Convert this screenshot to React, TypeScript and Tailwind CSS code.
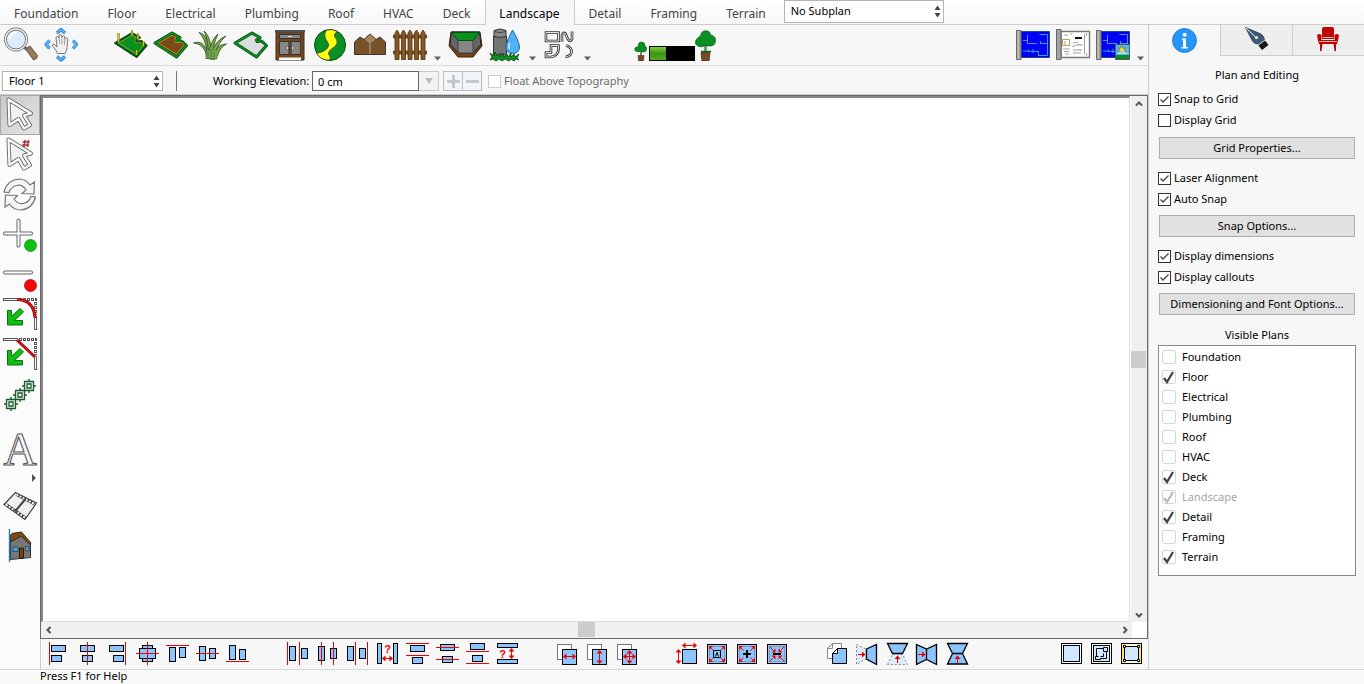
import React from "react";

type Kids = { children?: React.ReactNode };

const BLUE = "#8cc4fc";
const RED = "#f00000";

/* ---------- shared controls ---------- */

function Tool({ label, children, active }: Kids & { label: string; active?: boolean }) {
  return (
    <button
      type="button"
      aria-label={label}
      className={
        active
          ? "size-10 shrink-0 bg-linear-to-br from-[#c8c8c8] to-[#e4e4e4] outline-1 -outline-offset-1 outline-[#a8a8a8]"
          : "size-10 shrink-0"
      }
    >
      <svg viewBox="0 0 40 40" className="size-10 overflow-visible" fill="none">
        {children}
      </svg>
    </button>
  );
}

function More({ label }: { label: string }) {
  return (
    <button type="button" aria-label={label} className="h-10 w-[15px] shrink-0">
      <svg viewBox="0 0 15 40" className="h-10 w-[15px]">
        <path d="M4 31.500h7l-3.500 4z" fill="#606060" />
      </svg>
    </button>
  );
}

function Mini({ label, children }: Kids & { label: string }) {
  return (
    <button type="button" aria-label={label} className="size-[30px] shrink-0">
      <svg viewBox="0 0 30 30" className="size-[30px]" fill="none">
        {children}
      </svg>
    </button>
  );
}

function Picker({ label, value, className }: { label: string; value: string; className: string }) {
  return (
    <div className={"relative " + className}>
      <select
        aria-label={label}
        defaultValue={value}
        className="block h-full w-full appearance-none border border-[#b4b4b4] bg-white pl-1.5 text-[11px] text-black"
      >
        <option>{value}</option>
      </select>
      <svg viewBox="0 0 7 13" className="pointer-events-none absolute inset-y-0 right-[3px] my-auto h-[13px] w-[7px]" fill="#444">
        <path d="M.5 5h6L3.500.5zM.5 8h6L3.500 12.500z" />
      </svg>
    </div>
  );
}

function Check({ label, checked }: { label: string; checked?: boolean }) {
  return (
    <label className="flex h-[21px] items-center gap-[3px]">
      <span className="grid size-[13px]">
        <input
          type="checkbox"
          defaultChecked={checked}
          className="peer col-start-1 row-start-1 size-[13px] appearance-none border border-[#333] bg-white"
        />
        <svg
          viewBox="0 0 13 13"
          className="pointer-events-none invisible col-start-1 row-start-1 size-[13px] peer-checked:visible"
          fill="none"
        >
          <path d="M2.500 6.500 5 9l5.500-5.500" stroke="#444" strokeWidth="1.300" />
        </svg>
      </span>
      <span>{label}</span>
    </label>
  );
}

function PanelButton({ children }: Kids) {
  return (
    <button type="button" className="mx-px h-[22px] border border-[#adadad] bg-[#e1e1e1]">
      {children}
    </button>
  );
}

/* ---------- small drawing helpers ---------- */

type Box = [number, number, number, number];

function B({ r, fill = BLUE, stroke = "#000" }: { r: Box; fill?: string; stroke?: string }) {
  const [x1, y1, x2, y2] = r;
  return <rect x={x1 + 0.5} y={y1 + 0.5} width={x2 - x1 - 1} height={y2 - y1 - 1} fill={fill} stroke={stroke} />;
}

function HL({ y, a = 4, b = 27 }: { y: number; a?: number; b?: number }) {
  return <path d={`M${a} ${y}H${b}`} stroke={RED} />;
}

function VL({ x }: { x: number }) {
  return <path d={`M${x} 3V26`} stroke={RED} />;
}

function HArrow({ y, a, b }: { y: number; a: number; b: number }) {
  return (
    <g fill={RED}>
      <path d={`M${a + 2} ${y}H${b - 2}`} stroke={RED} />
      <path d={`M${a} ${y}l3.500-3v6zM${b} ${y}l-3.500-3v6z`} />
    </g>
  );
}

function VArrow({ x, a, b }: { x: number; a: number; b: number }) {
  return (
    <g fill={RED}>
      <path d={`M${x} ${a + 2}V${b - 2}`} stroke={RED} />
      <path d={`M${x} ${a}l3 3.500h-6zM${x} ${b}l3-3.500h-6z`} />
    </g>
  );
}

function Ask({ x, y }: { x: number; y: number }) {
  return (
    <text x={x} y={y} textAnchor="middle" fontSize="11" fontWeight="700" fontFamily="Liberation Sans, sans-serif" fill={RED}>
      ?
    </text>
  );
}

/* ---------- landscape tools ---------- */

const PLOT = "M5 18 22 8l8 4.500-3.500 2.500.5 1.500 4.500-.5 5 4.500L26.500 32z";

function Sheet({ picture }: { picture?: boolean }) {
  return (
    <>
      <path d="M8 6.500h28.500v26H8z" fill="#0000f4" stroke="#234a78" />
      <path
        d="M10 15.500h4M14.500 10v8.500H24M27.500 18.500h7.500M27.500 16v3M10 26h5.500v-1.500M20 24v4M15 26.500h10M25.500 30.500h9V9.500h-8M25.500 26v5"
        stroke="#3a9cdc"
      />
      <path d="M3.500 5.500h4.500v29H3.500z" fill="#a4a4a4" stroke="#666" />
      <path d="M5 6v28" stroke="#c8c8c8" />
      {picture && (
        <g>
          <path d="M22.500 19.500h14v15h-14z" fill="#58b8ec" stroke="#555" />
          <path d="M23 30h13v4H23z" fill="#0a8a20" />
          <path d="M25 22.500l2 1 1.500-2.500 1.500 2.500 2.500-1-1 2.500 1.500 1.500h-8l1.500-2z" fill="#f4e020" stroke="#444" strokeWidth=".5" />
          <path d="M24 29q1-3 4-2.500 3-1.500 5 1l2 1.500z" fill="#a8e0e8" />
        </g>
      )}
    </>
  );
}

function LandscapeTools() {
  return (
    <div className="flex h-10 items-center pl-px">
      <Tool label="Zoom">
        <path d="m24.500 24 4.500-3 7.500 9.500q0 3.500-4 4.500z" fill="#94795a" stroke="#4d4030" strokeWidth=".8" />
        <path d="m22.500 21.500 3.500 3" stroke="#666" strokeWidth="3" />
        <circle cx="15" cy="14.500" r="10.500" fill="#ddecfa" stroke="#666" strokeWidth="2.800" />
        <circle cx="15" cy="14.500" r="10.500" stroke="#eee" strokeWidth="1.300" />
        <path d="M8.500 14q1-6 7-6.500" stroke="#fff" strokeWidth="2" />
      </Tool>
      <Tool label="Pan">
        <g stroke="#236eb0" strokeWidth="3.200" strokeLinejoin="round">
          <path d="m16 8 4-3.500 4 3.500M16 31.500l4 3.500 4-3.500M8.500 15.500 5 19.500l3.500 4M32 15.500l3.500 4-3.500 4" />
        </g>
        <g stroke="#55b4fa" strokeWidth="2">
          <path d="m16 8 4-3.500 4 3.500M16 31.500l4 3.500 4-3.500M8.500 15.500 5 19.500l3.500 4M32 15.500l3.500 4-3.500 4" />
        </g>
        <path
          d="M16.500 28.500q-1-3-5-7.500-.5-2 1.500-2l3 3-1-9q.2-1.500 1.500-1.500 1 0 1.500 1.500l-.2-2q.3-1.500 1.500-1.500t1.500 1.500v1q.4-1.200 1.500-1.200 1.300 0 1.500 1.500v1.500q.5-1 1.600-.8 1.400.2 1.300 1.800l-.7 8q0 3-2 5.700z"
          fill="#f2f2f2"
          stroke="#666"
          strokeWidth=".9"
        />
        <path d="M18 13l.7 6M20.900 12v7M23.800 14l-.5 6" stroke="#888" strokeWidth=".8" />
      </Tool>
      <div className="w-[29px] shrink-0" />
      <Tool label="Lawn">
        <path d={PLOT} fill="#0a9020" stroke="#064d10" strokeWidth="2" strokeLinejoin="round" />
        <path d="m8.500 18 13.500-7.500 4 2-1.500 3 1 2.500 5-.5 3 3-7 8.500z" stroke="#b0a018" strokeWidth=".7" />
        <path d="M8.500 8v9M22 5.500v5.500M28 8.500v6M33.500 16v5M26.500 25v5" stroke="#55500e" strokeWidth="2" />
        <path d="M8.500 8v9M22 5.500v5.500M28 8.500v6M33.500 16v5M26.500 25v5" stroke="#e0c818" strokeWidth="1.300" />
      </Tool>
      <Tool label="Garden bed">
        <path d={PLOT} fill="#7a4a1c" stroke="#064d10" strokeWidth="3" strokeLinejoin="round" />
        <path d={PLOT} stroke="#0a9020" strokeWidth="1.600" strokeLinejoin="round" />
        <path d="M8.500 18 22 10.300l4 2-1.500 3 1 2.500 5.500-.5 3 3-7.500 9z" stroke="#d89018" strokeWidth=".9" />
      </Tool>
      <Tool label="Plants">
        <g stroke="#2a4a1a" fill="#78a850" strokeWidth=".8">
          <path d="M16 34c1-6-2-15-12.500-16 8-3 12.500 3 14 10z" />
          <path d="M17 34c1-9-2-21-8-26.500C17 9 19.500 20 20 29z" />
          <path d="M18 34c1-10-1-22-4-28 6 5 7.500 15 7 26z" />
          <path d="M19 34c-1-9 3-20 9-25-4 8-5 15-5 25z" />
          <path d="M21 34c0-9 6-20 15-23-7 6-10 13-11 23z" />
          <path d="M23 34c1-8 5-15 13.500-15-6 3-8 8-10 15z" />
        </g>
        <path d="M16 33.500h11l-1-8H17z" fill="#78a850" />
        <path d="M18 34v-7M21 34v-9M24 34v-7" stroke="#3e682c" strokeWidth=".8" />
      </Tool>
      <Tool label="Stepping area">
        <path d={PLOT} fill="#dcdcdc" stroke="#064d10" strokeWidth="3" strokeLinejoin="round" />
        <path d={PLOT} stroke="#0a9020" strokeWidth="1.500" strokeLinejoin="round" />
      </Tool>
      <Tool label="Outdoor cabinet">
        <path d="M6 7h28v28H6z" fill="#75481c" stroke="#3c2812" />
        <path d="M5 5h30v2.500H5z" fill="#4d5058" />
        <path d="M9.500 9.500h21v4h-21zM9.500 16.500h9.500v13H9.500zM21 16.500h9.500v13H21z" fill="#858585" stroke="#333" />
        <path d="M9 32.500h22V35H9z" fill="#f7f7f7" />
        <path d="M18 11.500h4M17.500 22v2M22.500 22v2" stroke="#ddd" />
      </Tool>
      <Tool label="Path">
        <circle cx="20" cy="20" r="15.500" fill="#0a9020" stroke="#064d10" />
        <path
          d="M16.500 5Q22 3.500 27.500 6.500 23.500 9 24.500 11.500q3.500 3 2.500 7-1 3-5.500 5.500-5 3.500-1.500 7.500 1 2-1 3.800-9-.5-12.500-7 8-1.300 11-5.300 2.500-3 0-6-5-6-1-12z"
          fill="#ffff10"
          stroke="#444"
          strokeWidth=".9"
        />
      </Tool>
      <Tool label="Hill">
        <path d="M4.500 29.500V17L10 12l4 2.500L20 9l6 5.500 4-2.500 5.500 5v12.500z" fill="#7a5228" stroke="#333" />
        <path d="M14 14.500 20 9l6 5.500-4 3.500h-4z" fill="#a88458" stroke="#444" strokeWidth=".7" />
        <path d="M20 17.500V29" stroke="#aaa" />
      </Tool>
      <Tool label="Fence">
        <g fill="#885824" stroke="#4c3010" strokeWidth=".8">
          <path d="M3.500 10h33v3h-33zM3.500 26h33v3h-33z" />
          {[5, 11.5, 18, 24.5, 31].map((x) => (
            <path key={x} d={`M${x} 34.500V8l2-3 2 3v26.500z`} />
          ))}
        </g>
      </Tool>
      <More label="More fences" />
      <Tool label="Planter">
        <path d="M6 7 4 21l9 11h15l9-11L35 7z" fill="#744418" stroke="#3a2410" />
        <path d="M6.500 7 5 19.500 13.500 28h14L36 19.500 34.500 7z" fill="#656565" stroke="#222" />
        <path d="M13 15.500h15V28H13z" fill="#858585" stroke="#444" />
        <path d="M6.500 7.500h28L28 15.500H13z" fill="#0a9020" stroke="#064d10" />
      </Tool>
      <Tool label="Watering">
        <path d="M8.500 11h13v19h-13z" fill="#747474" stroke="#333" />
        <path d="M9 5.500q5.500-3 12 0v6q-6 2-12 0z" fill="#8a8a8a" stroke="#333" />
        <path d="M9 6.500q6 2.500 12 0" stroke="#444" />
        <path d="M27.500 5q6.500 11 7 17 0 6-7 6.500-6.500-.5-6.500-6.500.5-6 6.500-17z" fill="#50b0fa" stroke="#2464a0" />
        <path d="M25 18q-2 3-.5 6" stroke="#d8f0ff" strokeWidth="1.500" />
        <path
          d="M5 35l2-3-2-4 4 3 1-4 2 4 3-3v4l3-4 1 4 3-3 1 3 3-4v4l3-3 1 3 4-3-2 4 2 2-3-1-2 2-3-2-2 2-4-2-3 2-3-2-3 2-3-2z"
          fill="#0a9020"
          stroke="#06400e"
          strokeWidth=".8"
        />
      </Tool>
      <More label="More watering" />
      <Tool label="Shapes">
        <g stroke="#333" strokeWidth="2.600">
          <path d="M6 7.500h12.500v8.500H6zM22 17V10q1.500-3.500 3.500-1.500l2.500 6q2.500 3 4-.5V6.500M11 20.500h7.500q1 11-8 11.500H6v-4.500h5zM26 20.500q6 2 5.500 6.500-.5 4-6 5" />
        </g>
        <g stroke="#f7f7f7" strokeWidth=".9">
          <path d="M6 7.500h12.500v8.500H6zM22 17V10q1.500-3.500 3.500-1.500l2.500 6q2.500 3 4-.5V6.500M11 20.500h7.500q1 11-8 11.500H6v-4.500h5zM26 20.500q6 2 5.500 6.500-.5 4-6 5" />
        </g>
      </Tool>
      <More label="More shapes" />
      <div className="flex items-end pl-[39px]">
        <svg viewBox="0 0 14 20" className="h-5 w-3.5" fill="none">
          <path d="M7 8v7" stroke="#7a8a7a" strokeWidth="2" />
          <path d="M4 6q0-5 3.500-5T11 5q2.500 1 1.500 4t-6 1.500Q1 11.500.700 8.500T4 6z" fill="#0a9020" stroke="#075a14" strokeWidth=".6" />
          <path d="M4 14.500h6L9.500 20h-5z" fill="#7c4a20" stroke="#333" strokeWidth=".6" />
        </svg>
        <div className="ml-px h-[15px] w-[46px] bg-black p-px">
          <div className="h-[13px] w-4 bg-linear-to-b from-[#85c840] via-[#3a9410] to-[#58ac24]" />
        </div>
        <svg viewBox="0 0 21 31" className="h-[31px] w-[21px]" fill="none">
          <path d="M10.500 15v8" stroke="#5f806a" strokeWidth="2.500" />
          <path d="M6 21.500h10" stroke="#0a7018" strokeWidth="1.500" />
          <path d="M5.500 6Q6 1 10.500.8T15.500 5q5.500 1 5 6t-5.500 5-5-.7q-3 2.700-7 .7T.8 10.500 5.500 6z" fill="#0a9020" stroke="#075a14" strokeWidth=".7" />
          <path d="M6 22.500h9L14 31H7z" fill="#7c4a20" stroke="#333" strokeWidth=".8" />
        </svg>
      </div>
      <div className="grow" />
      <Tool label="2D plan">
        <Sheet />
      </Tool>
      <Tool label="Sheet layout">
        <path d="M8 6.500h28.500v26H8z" fill="#fff" stroke="#777" strokeWidth="1.400" />
        <path d="M3.500 4.500h4.500v30H3.500z" fill="#a4a4a4" stroke="#666" />
        <path d="M9.500 14.500h7v6h-7zM12 16v4" stroke="#b87840" strokeWidth=".8" />
        <path d="M22 13h7" stroke="#111" strokeWidth="2" />
        <path
          d="M11 10h4M17 9h2M10 24h7M11 26.500h5M12 29h4M20 18l5-1M19 22l7-3M20 25h9M22 28h6M33.500 8v3M33.500 28v3M31.500 9v20"
          stroke="#888"
          strokeWidth=".8"
        />
        <path d="M25 20h5M20 28h2" stroke="#6bbb6b" />
      </Tool>
      <Tool label="3D plan">
        <Sheet picture />
      </Tool>
      <More label="More views" />
    </div>
  );
}

/* ---------- left tool strip ---------- */

function Outline({ d }: { d: string }) {
  return (
    <g strokeLinejoin="round">
      <path d={d} fill="#f2f2f2" stroke="#666" strokeWidth="4" />
      <path d={d} stroke="#fff" strokeWidth="2.200" />
    </g>
  );
}

function Corner() {
  return (
    <g>
      <path d="M3 4.500h15M35.500 21v14" stroke="#555" strokeWidth="3" />
      <path d="M4 4.500h14M35.500 21v13" stroke="#fff" strokeWidth="1.200" />
      <path d="M19 4.500h18M35.500 7v13" stroke="#555" strokeWidth="3" strokeDasharray="3 1" />
      <path d="M20 4.500h16M35.500 8v12" stroke="#fff" strokeWidth="1.200" strokeDasharray="1 3" />
      <path d="M7.500 30V15.500h4v6l8.500-8 3.500 3.500-9 8.500h8V30z" fill="#10c010" stroke="#0c7010" strokeLinejoin="round" />
    </g>
  );
}

function Node({ x, y }: { x: number; y: number }) {
  return (
    <g transform={`translate(${x} ${y})`} stroke="#1c5a30">
      <path d="M-7 0H7M0-7V7" strokeWidth="1.400" />
      <path d="M-4.500-4.500h9v9h-9z" fill="#e6f0e6" strokeWidth="1.300" />
      <path d="M-2-2h4v4h-4z" fill="#fff" strokeWidth="1.300" />
    </g>
  );
}

const POINTER = "M8.500 4.500 31 18.500l-7 2L30 30l-6 3.500-5.500-9.500L9.500 30z";

function SideTools() {
  return (
    <nav aria-label="Drawing tools" className="flex w-10 shrink-0 flex-col bg-[#fbfbfb]">
      <Tool label="Select" active>
        <Outline d={POINTER} />
      </Tool>
      <Tool label="Select by number">
        <Outline d={POINTER} />
        <path d="m25 5-1 7M28.500 5l-1 7M22.500 7h7M22 10h7" stroke="#a83434" strokeWidth="1.500" />
      </Tool>
      <Tool label="Rotate">
        <path d="M4 17Q7 5 19 4q7 0 11 6l4.500-3-.5 12-12-.5L26 15q-4-6-9-4.500-6 1-8 7z" fill="#f6f6f6" stroke="#777" strokeWidth="1.200" />
        <path d="M35.500 22q-3 12-15 13-7 0-11-6L5 32l.5-12 12 .5L14 24q4 5.500 9 4.500 6-1 8-7z" fill="#f6f6f6" stroke="#777" strokeWidth="1.200" />
      </Tool>
      <Tool label="Add point">
        <path d="M5 18.500h26M18.500 5.500v25" stroke="#666" strokeWidth="4" strokeLinecap="round" />
        <path d="M5 18.500h26M18.500 5.500v25" stroke="#fff" strokeWidth="2" strokeLinecap="round" />
        <circle cx="30.500" cy="30.500" r="6" fill="#10c010" stroke="#109410" strokeWidth=".8" />
      </Tool>
      <Tool label="Remove point">
        <path d="M5 17.500h26" stroke="#666" strokeWidth="4" strokeLinecap="round" />
        <path d="M5 17.500h26" stroke="#fff" strokeWidth="2" strokeLinecap="round" />
        <circle cx="30.500" cy="30.500" r="6" fill="#f40808" stroke="#b01010" strokeWidth=".8" />
      </Tool>
      <Tool label="Fillet">
        <Corner />
        <path d="M17 4.500Q34 5 35 23" stroke="#701010" strokeWidth="3" />
        <path d="M17 4.500Q34 5 35 23" stroke="#f01010" strokeWidth="1.600" />
      </Tool>
      <Tool label="Chamfer">
        <Corner />
        <path d="m17 5 18 17" stroke="#701010" strokeWidth="3" />
        <path d="m17 5 18 17" stroke="#f01010" strokeWidth="1.600" />
      </Tool>
      <Tool label="Copy along line">
        <path d="M11 29 29 11" stroke="#1c5a30" strokeWidth="2" />
        <Node x={11} y={29} />
        <Node x={20} y={20} />
        <Node x={29} y={11} />
      </Tool>
      <div className="h-[15px]" />
      <Tool label="Text">
        <text x="20" y="35" textAnchor="middle" fontSize="46" fontFamily="Liberation Serif, serif" fill="#fafafa" stroke="#555" strokeWidth="1.100">
          A
        </text>
      </Tool>
      <button type="button" aria-label="More text tools" className="flex h-[15px] w-10 items-center justify-end pr-1">
        <svg viewBox="0 0 4 8" className="h-2 w-1" fill="#555">
          <path d="M0 0v8l4-4z" />
        </svg>
      </button>
      <Tool label="Walkthrough">
        <path d="M15.500 7.500 36.500 18 25 34.500 4 19.500z" fill="#f0f0f0" stroke="#444" strokeWidth="1.200" />
        <path d="m16.500 9.500 18 9.500M6 19.500 25.500 33" stroke="#444" strokeWidth="3" />
        <path d="m16.500 9.500 18 9.500M6 19.500 25.500 33" stroke="#fff" strokeWidth="1.800" strokeDasharray="2 1.500" />
        <path d="M25.500 14 15 26.500" stroke="#444" strokeWidth="2" />
      </Tool>
      <Tool label="Elevation">
        <path d="M10.500 17 21 9.500l9.500 9v14l-20 2z" fill="#777" stroke="#333" />
        <path d="M10 11 12 8.500 21.500 7 31 18l-1 1.500-9-8.500-10.500 6z" fill="#7c4a18" stroke="#3a2410" />
        <path d="M13 22h5v4.500h-5zM25.500 21.500h3.500v4.500h-3.500z" fill="#38a8f0" stroke="#333" strokeWidth=".7" />
        <path d="M19.500 23h4v10l-4 .5z" fill="#754218" stroke="#2c1a08" />
        <path d="M9.500 4v33" stroke="#287cc4" strokeWidth="1.400" />
      </Tool>
    </nav>
  );
}

/* ---------- align and arrange tools ---------- */

const ALIGN: { label: string; h?: number[]; v?: number[]; boxes: Box[] }[] = [
  { label: "Align left", v: [7.5], boxes: [[9, 6, 24, 13], [9, 16, 20, 23]] },
  { label: "Align center", v: [15.5], boxes: [[8, 6, 23, 13], [10, 16, 21, 23]] },
  { label: "Align right", v: [23.5], boxes: [[7, 6, 22, 13], [11, 16, 22, 23]] },
  { label: "Align centers", v: [15.5], h: [14.5], boxes: [[10, 6, 21, 23], [7, 9, 24, 20]] },
  { label: "Align top", h: [6.5], boxes: [[7, 8, 14, 23], [17, 8, 24, 19]] },
  { label: "Align middle", h: [14.5], boxes: [[7, 7, 14, 22], [17, 9, 24, 20]] },
  { label: "Align bottom", h: [22.5], boxes: [[7, 6, 14, 21], [17, 10, 24, 21]] },
];

const SPREAD_X: typeof ALIGN = [
  { label: "Distribute left edges", v: [5.5, 17.5], boxes: [[7, 7, 14, 22], [19, 9, 26, 20]] },
  { label: "Distribute centers across", v: [9.5, 21.5], boxes: [[6, 7, 13, 22], [18, 9, 25, 20]] },
  { label: "Distribute right edges", v: [13.5, 25.5], boxes: [[5, 7, 12, 22], [17, 9, 24, 20]] },
];

const SPREAD_Y: typeof ALIGN = [
  { label: "Distribute top edges", h: [4.5, 16.5], boxes: [[8, 6, 23, 13], [10, 18, 21, 25]] },
  { label: "Distribute centers down", h: [8.5, 20.5], boxes: [[8, 5, 23, 12], [10, 17, 21, 24]] },
  { label: "Distribute bottom edges", h: [12.5, 24.5], boxes: [[8, 4, 23, 11], [10, 16, 21, 23]] },
];

function AlignSet({ items }: { items: typeof ALIGN }) {
  return (
    <>
      {items.map((it) => (
        <Mini key={it.label} label={it.label}>
          {it.boxes.map((r, i) => (
            <B key={i} r={r} />
          ))}
          {it.h?.map((y) => <HL key={y} y={y} />)}
          {it.v?.map((x) => <VL key={x} x={x} />)}
        </Mini>
      ))}
    </>
  );
}

function Resize({ inward }: { inward?: boolean }) {
  return (
    <g>
      <rect x="5.500" y="5.500" width="19" height="19" fill={BLUE} stroke="#000" />
      <rect x="7.500" y="7.500" width="15" height="15" stroke="#777" strokeDasharray="1 1" />
      {inward ? (
        <g>
          <path d="M13.500 13.500h-4l4-4zM16.500 13.500h4l-4-4zM13.500 16.500h-4l4 4zM16.500 16.500h4l-4 4z" fill={RED} />
          <path d="m7.500 7.500 4 4M22.500 7.500l-4 4M7.500 22.500l4-4M22.500 22.500l-4-4" stroke={RED} />
        </g>
      ) : (
        <g>
          <path d="M7 7h4l-4 4zM23 7h-4l4 4zM7 23h4l-4-4zM23 23h-4l4-4z" fill={RED} />
          <path d="m8 8 3.500 3.500M22 8l-3.500 3.500M8 22l3.500-3.500M22 22l-3.500-3.500" stroke={RED} />
        </g>
      )}
    </g>
  );
}

function PairBack() {
  return (
    <>
      <B r={[5, 5, 20, 21]} fill="#fff" stroke="#777" />
      <B r={[10, 10, 25, 26]} />
    </>
  );
}

function ArrangeTools() {
  return (
    <div className="flex h-[30px] border-l border-[#ccc] pr-0.5 pl-px">
      <div className="flex grow gap-[30px]">
        <div className="flex">
          <AlignSet items={ALIGN} />
        </div>
        <div className="flex">
          <AlignSet items={SPREAD_X} />
          <Mini label="Set horizontal spacing">
            <B r={[5, 4, 10, 25]} />
            <B r={[21, 4, 26, 25]} />
            <Ask x={15.5} y={14} />
            <HArrow y={19.5} a={10} b={21} />
          </Mini>
          <AlignSet items={SPREAD_Y} />
          <Mini label="Set vertical spacing">
            <B r={[5, 4, 26, 9]} />
            <B r={[5, 20, 26, 25]} />
            <Ask x={10.5} y={18.5} />
            <VArrow x={19.5} a={9} b={20} />
          </Mini>
        </div>
        <div className="flex">
          <Mini label="Same width">
            <PairBack />
            <HArrow y={17.5} a={11} b={24} />
          </Mini>
          <Mini label="Same height">
            <PairBack />
            <VArrow x={17.5} a={11} b={25} />
          </Mini>
          <Mini label="Same size">
            <PairBack />
            <HArrow y={17.5} a={11} b={24} />
            <VArrow x={17.5} a={11} b={25} />
          </Mini>
        </div>
        <div className="flex">
          <Mini label="Set size">
            <B r={[10, 10, 25, 25]} />
            <HArrow y={6.5} a={10} b={25} />
            <VArrow x={6.5} a={10} b={25} />
          </Mini>
          <Mini label="Scale">
            <Resize />
            <path d="M11.500 11.500h7v7h-7zM13.500 17.500l1.500-4 1.500 4" fill={BLUE} stroke="#000" />
          </Mini>
          <Mini label="Enlarge">
            <Resize />
            <path d="M11 15h8M15 11v8" stroke="#000" strokeWidth="2" />
          </Mini>
          <Mini label="Shrink">
            <Resize inward />
            <path d="M11 15h8" stroke="#000" strokeWidth="2" />
          </Mini>
        </div>
        <div className="flex">
          <Mini label="Duplicate">
            <path d="M10.500 4.500h9v15h-14v-10l5-5v5h-5" fill="#fff" stroke="#888" />
            <path d="M15.500 9.500h9v15h-14v-10z" fill={BLUE} stroke="#000" />
            <path d="m10.500 14.500 5-5v5z" fill="#fff" stroke="#000" />
          </Mini>
          <Mini label="Mirror copy across">
            <path d="M4.500 5.500 14 10v10l-9.500 5.500z" fill="#dcecfc" stroke="#888" strokeDasharray="2 2" />
            <path d="M14.500 10 24.500 5.500v20L14.500 20z" fill={BLUE} stroke="#000" strokeWidth="1.300" />
            <path d="M6 15h4v-2.500l3.500 3-3.500 3V16H6z" fill={RED} />
          </Mini>
          <Mini label="Mirror copy down">
            <path d="M5.500 25.500 10.500 15h10l5 10.500z" fill="#dcecfc" stroke="#888" strokeDasharray="2 2" />
            <path d="M5.500 4.500h20l-5 10h-10z" fill={BLUE} stroke="#000" strokeWidth="1.300" />
            <path d="M15 24v-4h-2.500l3-3.500 3 3.500H16v4z" fill={RED} />
          </Mini>
          <Mini label="Flip across">
            <path d="M4.500 5.500 14.500 10l10-4.500v20l-10-5-10 5zM14.500 10v10.500" fill={BLUE} stroke="#000" strokeWidth="1.300" />
            <path d="M6 15h4v-2.500l3.500 3-3.500 3V16H6z" fill={RED} />
          </Mini>
          <Mini label="Flip down">
            <path d="M5.500 4.500h20l-5 10 5 10.500h-20l5-10.500zM10.500 14.500h10" fill={BLUE} stroke="#000" strokeWidth="1.300" />
            <path d="M15 24v-4h-2.500l3-3.500 3 3.500H16v4z" fill={RED} />
          </Mini>
        </div>
      </div>
      <Mini label="Fit page">
        <B r={[5, 4, 26, 25]} fill="#fff" />
        <B r={[7, 6, 24, 23]} fill="#d0e8ff" />
      </Mini>
      <Mini label="Fit drawing">
        <B r={[5, 4, 26, 25]} fill="#fff" />
        <B r={[7, 6, 24, 23]} fill="#d0e8ff" />
        <path d="M10.500 17.500v-8h7v-1h4v4h-1v7h-6v1h-5v-3h3M17.500 9.500v3h3M14.500 17.500h3v-3" stroke="#000" />
      </Mini>
      <Mini label="Fit selection">
        <B r={[5, 4, 26, 25]} fill="#ffe070" />
        <path d="M9 6h13M9 23h13" stroke="#fff" strokeWidth="1.500" />
        <B r={[8, 7, 23, 22]} fill="#d0e8ff" />
        <path d="M7.500 6.500h2v2h-2zM21.500 6.500h2v2h-2zM7.500 20.500h2v2h-2zM21.500 20.500h2v2h-2z" fill="#fff" stroke="#000" />
      </Mini>
    </div>
  );
}

/* ---------- canvas ---------- */

function Chevron({ d, label }: { d: string; label: string }) {
  return (
    <button type="button" aria-label={label} className="flex size-[15px] shrink-0 items-center justify-center">
      <svg viewBox="0 0 8 8" className="size-2" fill="none">
        <path d={d} stroke="#555" strokeWidth="2" />
      </svg>
    </button>
  );
}

function Canvas() {
  return (
    <div className="flex min-h-0 grow flex-col border border-[#696969] bg-white">
      <div className="flex min-h-0 grow">
        <main className="min-w-0 grow border-t-2 border-r border-b border-l-2 border-t-[#858585] border-r-[#ddd] border-b-[#ddd] border-l-[#858585] bg-white" />
        <div className="ml-px flex w-4 flex-col bg-[#f0f0f0] pr-px">
          <Chevron label="Scroll up" d="M1 5.500l3-3 3 3" />
          <div className="flex grow flex-col justify-center">
            <div className="h-[17px] bg-[#cdcdcd]" />
          </div>
          <Chevron label="Scroll down" d="M1 2.500l3 3 3-3" />
        </div>
      </div>
      <div className="flex h-4 bg-[#f0f0f0] pb-px">
        <Chevron label="Scroll left" d="M5.500 1l-3 3 3 3" />
        <div className="flex grow justify-center">
          <div className="w-[17px] bg-[#cdcdcd]" />
        </div>
        <Chevron label="Scroll right" d="M2.500 1l3 3-3 3" />
        <div className="h-4 w-[15px] bg-white" />
      </div>
    </div>
  );
}

/* ---------- elevation bar ---------- */

function ElevationBar() {
  return (
    <div className="flex h-[29px] items-center border-t border-[#dcdcdc] pt-0.5 pl-0.5 text-[11px]">
      <Picker label="Floor" value="Floor 1" className="h-5 w-[161px]" />
      <div className="ml-[13px] h-5 w-px bg-[#777]" />
      <label htmlFor="elevation" className="ml-9 w-[99px] whitespace-nowrap">
        Working Elevation:
      </label>
      <input id="elevation" defaultValue="0 cm" className="h-5 w-[107px] border border-[#666] bg-white px-[5px]" />
      <button type="button" aria-label="Elevation presets" className="flex h-5 w-5 items-center justify-center border border-l-0 border-[#c8c8c8] bg-[#f3f3f3]">
        <svg viewBox="0 0 8 6" className="h-1.5 w-2" fill="#bbb">
          <path d="M0 0h8L4 6z" />
        </svg>
      </button>
      <button type="button" aria-label="Raise" className="ml-1 flex h-5 w-5 items-center justify-center border border-[#b8bec4] bg-[#f2f6fa]">
        <svg viewBox="0 0 13 13" className="size-[13px]" stroke="#c4c8cc" strokeWidth="3">
          <path d="M0 6.500h13M6.500 0v13" />
        </svg>
      </button>
      <button type="button" aria-label="Lower" className="flex h-5 w-[19px] items-center justify-center border border-l-0 border-[#b8bec4] bg-[#f2f6fa]">
        <svg viewBox="0 0 13 13" className="size-[13px]" stroke="#c4c8cc" strokeWidth="3">
          <path d="M0 6.500h13" />
        </svg>
      </button>
      <label className="ml-1.5 flex items-center gap-[3px] text-[#6d6d6d]">
        <input type="checkbox" disabled className="size-[13px] appearance-none border border-[#ccc] bg-white" />
        Float Above Topography
      </label>
    </div>
  );
}

/* ---------- property panel ---------- */

const PLANS: [string, boolean][] = [
  ["Foundation", false],
  ["Floor", true],
  ["Electrical", false],
  ["Plumbing", false],
  ["Roof", false],
  ["HVAC", false],
  ["Deck", true],
  ["Landscape", true],
  ["Detail", true],
  ["Framing", false],
  ["Terrain", true],
];

function PlanRow({ name, checked }: { name: string; checked: boolean }) {
  const locked = name === "Landscape";
  return (
    <li>
      <label className={locked ? "flex h-5 items-center gap-1.5 text-[#a5a5a5]" : "flex h-5 items-center gap-1.5"}>
        <span className="grid size-3.5">
          <input
            type="checkbox"
            defaultChecked={checked}
            disabled={locked}
            className="peer col-start-1 row-start-1 size-3.5 appearance-none rounded-xs border border-[#d6d6d6] bg-white"
          />
          <svg
            viewBox="0 0 14 14"
            className="pointer-events-none invisible col-start-1 row-start-1 size-3.5 peer-checked:visible"
            fill="none"
          >
            <path d="m2 8 3 4 6-10" stroke={locked ? "#bbb" : "#444"} strokeWidth="2.300" />
          </svg>
        </span>
        {name}
      </label>
    </li>
  );
}

function PropertyPanel() {
  return (
    <aside className="flex w-[216px] shrink-0 flex-col border-l border-[#ccc] text-[11px]">
      <div className="flex h-[31px]">
        <button type="button" aria-label="Information" className="flex w-[71px] justify-center pt-[3px]">
          <svg viewBox="0 0 25 25" className="size-[25px]">
            <circle cx="12.500" cy="12.500" r="12" fill="#2496fa" stroke="#1874cc" strokeWidth=".8" />
            <path d="M10 10.500h4V19h2v1.500h-6.500V19h1.500v-7H10z" fill="#fff" />
            <circle cx="12.700" cy="6.700" r="2" fill="#fff" />
          </svg>
        </button>
        <button type="button" aria-label="Appearance" className="flex w-[72px] justify-center border-b border-l border-[#ccc] bg-[#eee] pt-0.5">
          <svg viewBox="0 0 24 24" className="size-6" fill="none">
            <path d="M.5.5 16 7q3 2 3.500 5.500L13.500 17q-4 .5-6-3z" fill="#3e5a78" stroke="#24384e" strokeWidth=".8" />
            <path d="m1 1 9.500 9" stroke="#eee" />
            <circle cx="11.500" cy="10.500" r="1.600" fill="#eee" />
            <path d="m13.500 18.500 6.500-5 3.500 4.500-6.500 5z" fill="#151515" />
          </svg>
        </button>
        <button type="button" aria-label="Objects" className="flex w-[72px] justify-center border-b border-l border-[#ccc] bg-[#eee] pt-0.5 pr-0.5">
          <svg viewBox="0 0 22 24" className="h-6 w-[22px]" fill="#c00404">
            <path d="M5 2q0-2 2-2h8q2 0 2 2v10H5zM0 8q2.500-2 4.500 0v5h13V8Q20 6 22 8l-1 6-1 3h-1v7h-1.500l-1-7h-11l-1 7H3v-7H2l-1-3z" />
            <path d="M5.500 10.500h11M2 14.500h18" stroke="#eee" strokeWidth=".8" />
          </svg>
        </button>
      </div>
      <div className="flex flex-col pt-[9px] pr-2 pl-[9px]">
        <h2 className="h-[21px] text-center leading-5">Plan and Editing</h2>
        <div className="mt-[3px] mb-1.5">
          <Check label="Snap to Grid" checked />
          <Check label="Display Grid" />
        </div>
        <PanelButton>Grid Properties...</PanelButton>
        <div className="mt-[9px] mb-[5px]">
          <Check label="Laser Alignment" checked />
          <Check label="Auto Snap" checked />
        </div>
        <PanelButton>Snap Options...</PanelButton>
        <div className="mt-[9px] mb-[5px]">
          <Check label="Display dimensions" checked />
          <Check label="Display callouts" checked />
        </div>
        <PanelButton>Dimensioning and Font Options...</PanelButton>
        <h2 className="mt-2.5 h-5 text-center leading-5">Visible Plans</h2>
        <ul className="h-[231px] border border-[#828790] bg-white pt-px pl-[3px]">
          {PLANS.map(([name, checked]) => (
            <PlanRow key={name} name={name} checked={checked} />
          ))}
        </ul>
      </div>
    </aside>
  );
}

/* ---------- page ---------- */

const TABS = ["Foundation", "Floor", "Electrical", "Plumbing", "Roof", "HVAC", "Deck", "Landscape", "Detail", "Framing", "Terrain"];

export default function App() {
  return (
    <div className="flex h-screen flex-col overflow-hidden bg-[#f7f7f7] font-['Noto_Sans','Open_Sans',sans-serif] text-black">
      <header className="flex h-[25px] shrink-0 bg-linear-to-b from-white to-[#f7f7f7]">
        <div role="tablist" className="flex text-[12px] text-[#444]">
          {TABS.map((t) => (
            <button
              key={t}
              type="button"
              role="tab"
              aria-selected={t === "Landscape"}
              className={
                t === "Landscape"
                  ? "border-x border-[#ccc] bg-[#f7f7f7] pt-[3px] pr-3.5 pl-[13px] text-black"
                  : "border-b border-[#ccc] pt-1 pr-[15px] pl-3.5"
              }
            >
              {t}
            </button>
          ))}
        </div>
        <div className="flex grow border-b border-[#ccc] pl-[3px]">
          <Picker label="Subplan" value="No Subplan" className="h-[23px] w-40" />
        </div>
      </header>
      <div className="flex min-h-0 grow">
        <div className="flex min-w-0 grow flex-col">
          <LandscapeTools />
          <ElevationBar />
          <div className="flex min-h-0 grow border-t border-[#ccc]">
            <SideTools />
            <div className="flex min-w-0 grow flex-col">
              <Canvas />
              <ArrangeTools />
            </div>
          </div>
        </div>
        <PropertyPanel />
      </div>
      <footer className="h-[15px] shrink-0 border-t border-[#d8d8d8] bg-[#fafafa] pl-10 text-[11px] leading-3">Press F1 for Help</footer>
    </div>
  );
}
